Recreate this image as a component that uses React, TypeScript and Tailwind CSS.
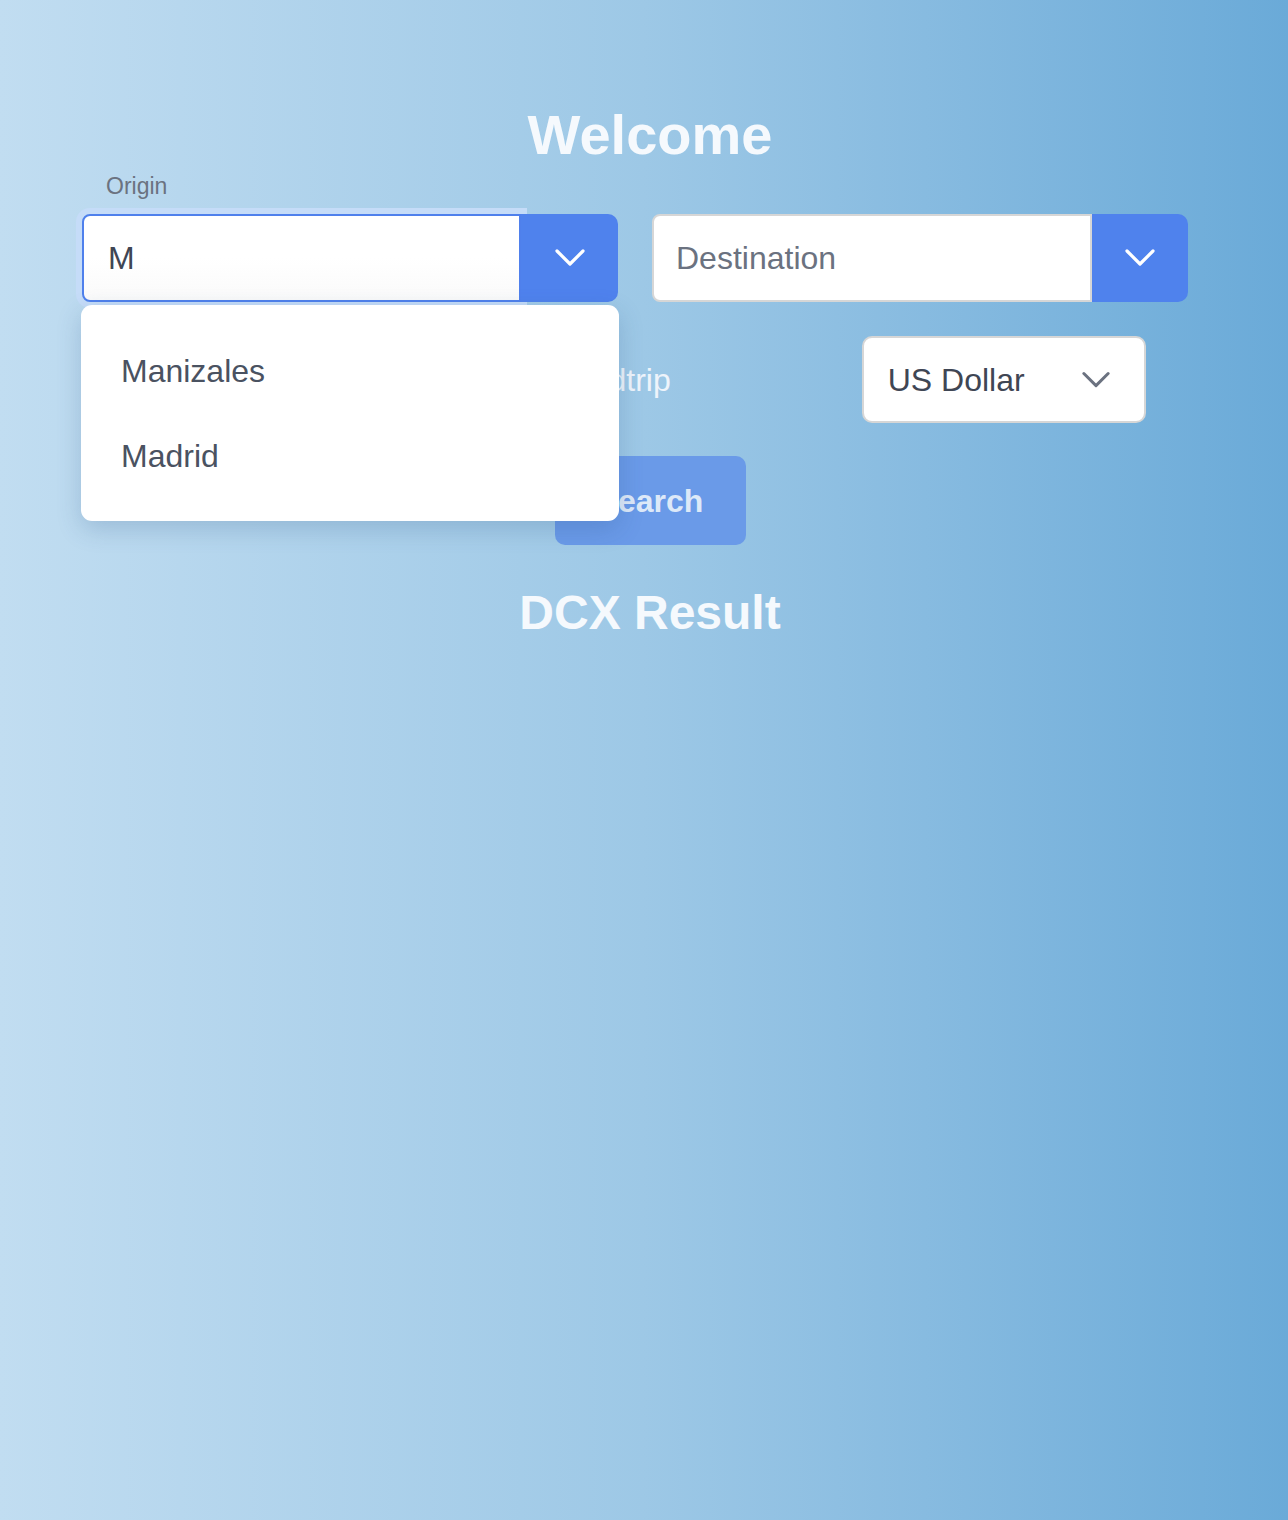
import { useState } from 'react';

const font = { fontFamily: '"Liberation Sans", Arial, sans-serif' };

function Chevron({ className }: { className?: string }) {
  return (
    <svg width="30" height="18" viewBox="0 0 30 18" fill="none" className={className}>
      <polyline
        points="2,2 15,15 28,2"
        stroke="currentColor"
        strokeWidth="3.2"
        strokeLinecap="round"
        strokeLinejoin="round"
      />
    </svg>
  );
}

export default function App() {
  const [origin, setOrigin] = useState('M');
  const [destination, setDestination] = useState('');
  const [roundtrip, setRoundtrip] = useState(false);
  const cities = ['Manizales', 'Madrid'];

  return (
    <div
      className="min-h-screen w-full bg-gradient-to-r from-[#c1ddf1] via-[#9dc8e6] to-[#6aaad8]"
      style={font}
    >
      {/* Title */}
      <h1 className="pt-[103px] pl-[12px] text-center text-[56px] leading-[64px] font-bold text-[#f5f9fd]">
        Welcome
      </h1>

      <div className="pl-[82px] w-[1188px]">
        <label className="block mt-[5px] ml-[24px] text-[23px] leading-[28px] text-[#6b7280]">
          Origin
        </label>

        {/* Origin / destination */}
        <div className="mt-[14px] flex gap-[34px]">
          <div className="relative flex-1 flex h-[88px]">
            <div className="flex-1 flex items-center pl-[24px] rounded-l-lg border-2 border-[#4f80ec] bg-gradient-to-b from-white via-white to-[#fafafa] shadow-[0_0_0_6px_#c5dcf8]">
              <input
                value={origin}
                onChange={(e) => setOrigin(e.target.value)}
                className="w-full bg-transparent outline-none text-[32px] text-[#3f4654]"
              />
            </div>
            <button className="relative z-10 w-[97px] rounded-r-[10px] bg-[#4f82ed] text-white flex items-center justify-center">
              <Chevron />
            </button>

            {/* Suggestions */}
            <ul className="absolute z-20 left-[-1px] top-[91px] w-[538px] py-[23px] rounded-[11px] bg-white shadow-[0_8px_24px_rgba(40,80,130,0.22)]">
              {cities.map((c) => (
                <li
                  key={c}
                  onClick={() => setOrigin(c)}
                  className="h-[85px] flex items-center px-[40px] text-[32px] text-[#4a5261] cursor-pointer"
                >
                  {c}
                </li>
              ))}
            </ul>
          </div>

          <div className="flex-1 flex h-[88px]">
            <div className="flex-1 flex items-center pl-[22px] rounded-l-lg border-2 border-[#d6d6d6] bg-white">
              <input
                value={destination}
                onChange={(e) => setDestination(e.target.value)}
                placeholder="Destination"
                className="w-full bg-transparent outline-none text-[32px] text-[#3f4654] placeholder:text-[#6b7280]"
              />
            </div>
            <button className="w-[96px] rounded-r-[10px] bg-[#4f82ed] text-white flex items-center justify-center">
              <Chevron />
            </button>
          </div>
        </div>

        {/* Options */}
        <div className="mt-[34px] flex items-center h-[87px]">
          <label className="ml-[418px] flex items-center gap-3 text-[32px] text-[#eef4fb] cursor-pointer">
            <input
              type="checkbox"
              checked={roundtrip}
              onChange={(e) => setRoundtrip(e.target.checked)}
              className="w-5 h-5"
            />
            Roundtrip
          </label>
          <div className="ml-[191px] w-[284px] h-[87px] flex items-center justify-between pl-[24px] pr-[34px] rounded-[10px] border-2 border-[#d6d6d6] bg-white">
            <span className="text-[32px] text-[#3f4654]">US Dollar</span>
            <Chevron className="text-[#6b7280] w-[28px]" />
          </div>
        </div>
      </div>

      <div className="mt-[33px] pl-[12px] flex justify-center">
        <button className="w-[191px] h-[89px] rounded-[10px] bg-[#6a9ae8] text-[32px] font-bold text-[#dde9f8]">
          Search
        </button>
      </div>

      <h2 className="mt-[40px] pl-[12px] text-center text-[48px] leading-[56px] font-bold text-[#f5f9fd]">
        DCX Result
      </h2>
    </div>
  );
}
